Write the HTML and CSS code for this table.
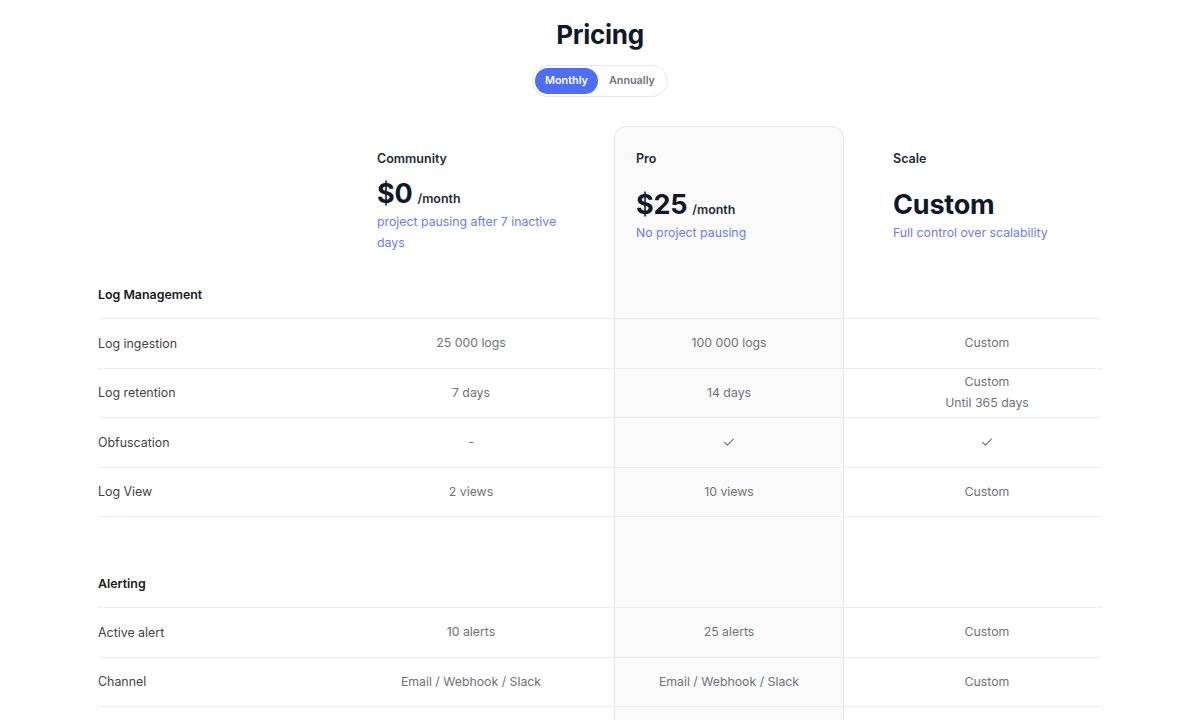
FILE: index.html
```html
<!DOCTYPE html>
<html lang="en">
<head>
<meta charset="utf-8">
<title>Pricing</title>
<link rel="stylesheet" href="styles.css">
</head>
<body>
<main class="page">
  <h1 class="title">Pricing</h1>
  <div class="toggle-wrap">
    <div class="toggle">
      <button class="tbtn active">Monthly</button>
      <button class="tbtn">Annually</button>
    </div>
  </div>

  <div class="table">
    <div class="row head">
      <div class="cell"></div>
      <div class="cell plan">
        <div class="plan-name">Community</div>
        <div class="plan-body">
          <div class="price"><span class="amount">$0</span><span class="per">/month</span></div>
          <div class="desc">project pausing after 7 inactive days</div>
        </div>
      </div>
      <div class="cell plan pro pro-top">
        <div class="plan-name">Pro</div>
        <div class="plan-body">
          <div class="price"><span class="amount">$25</span><span class="per">/month</span></div>
          <div class="desc">No project pausing</div>
        </div>
      </div>
      <div class="cell plan">
        <div class="plan-name">Scale</div>
        <div class="plan-body">
          <div class="price solo"><span class="amount">Custom</span></div>
          <div class="desc">Full control over scalability</div>
        </div>
      </div>
    </div>

    <div class="row section">
      <div class="cell label-strong">Log Management</div>
      <div class="cell"></div>
      <div class="cell pro"></div>
      <div class="cell"></div>
    </div>
    <div class="row line">
      <div class="cell label">Log ingestion</div>
      <div class="cell val">25 000 logs</div>
      <div class="cell val pro">100 000 logs</div>
      <div class="cell val">Custom</div>
    </div>
    <div class="row line">
      <div class="cell label">Log retention</div>
      <div class="cell val">7 days</div>
      <div class="cell val pro">14 days</div>
      <div class="cell val">Custom<br>Until 365 days</div>
    </div>
    <div class="row line">
      <div class="cell label">Obfuscation</div>
      <div class="cell val">-</div>
      <div class="cell val pro"><svg class="check" viewBox="0 0 16 16"><path d="M3 8.5l3.2 3L13 4.8"/></svg></div>
      <div class="cell val"><svg class="check" viewBox="0 0 16 16"><path d="M3 8.5l3.2 3L13 4.8"/></svg></div>
    </div>
    <div class="row line">
      <div class="cell label">Log View</div>
      <div class="cell val">2 views</div>
      <div class="cell val pro">10 views</div>
      <div class="cell val">Custom</div>
    </div>

    <div class="row spacer">
      <div class="cell"></div>
      <div class="cell"></div>
      <div class="cell pro"></div>
      <div class="cell"></div>
    </div>

    <div class="row section">
      <div class="cell label-strong">Alerting</div>
      <div class="cell"></div>
      <div class="cell pro"></div>
      <div class="cell"></div>
    </div>
    <div class="row line">
      <div class="cell label">Active alert</div>
      <div class="cell val">10 alerts</div>
      <div class="cell val pro">25 alerts</div>
      <div class="cell val">Custom</div>
    </div>
    <div class="row line">
      <div class="cell label">Channel</div>
      <div class="cell val">Email / Webhook / Slack</div>
      <div class="cell val pro">Email / Webhook / Slack</div>
      <div class="cell val">Custom</div>
    </div>
    <div class="row line">
      <div class="cell label">&nbsp;</div>
      <div class="cell val"></div>
      <div class="cell val pro"></div>
      <div class="cell val"></div>
    </div>
  </div>
</main>
</body>
</html>
```

FILE: styles.css
```css
* { box-sizing: border-box; }
html, body { margin: 0; padding: 0; background: #ffffff; }
body {
  font-family: Inter, "Noto Sans", "Liberation Sans", sans-serif;
  color: #3f3f46;
  overflow: hidden;
  height: 720px;
}
.page {
  width: 1004px;
  margin: 0 auto;
  padding-top: 17px;
}
.title {
  margin: 0;
  text-align: center;
  font-size: 26px;
  line-height: 36px;
  font-weight: 700;
  color: #111827;
  letter-spacing: -0.3px;
}
.toggle-wrap {
  display: flex;
  justify-content: center;
  margin-top: 12px;
}
.toggle {
  display: flex;
  gap: 1px;
  padding: 2px;
  border: 1px solid #e5e7eb;
  border-radius: 999px;
  background: #fff;
}
.tbtn {
  font-family: inherit;
  font-size: 10.8px;
  font-weight: 600;
  line-height: 16px;
  padding: 5px 10px;
  height: 26px;
  border: 0;
  border-radius: 999px;
  background: transparent;
  color: #6b7280;
}
.tbtn.active {
  background: #4f6ef7;
  color: #fff;
}
.table {
  margin-top: 29px;
}
.row {
  display: grid;
  grid-template-columns: repeat(4, 230px);
  column-gap: 28px;
}
.cell {
  display: flex;
  align-items: center;
}
.pro {
  background: #fafafa;
  border-left: 1px solid #e5e7eb;
  border-right: 1px solid #e5e7eb;
}
.pro-top {
  border-top: 1px solid #e5e7eb;
  border-radius: 12px 12px 0 0;
}
.head { height: 145px; }
.plan {
  flex-direction: column;
  align-items: flex-start;
  padding: 23px 21px 11px 21px;
}
.plan.pro-top { padding-top: 22px; }
.plan-name {
  font-size: 12.5px;
  line-height: 20px;
  font-weight: 600;
  color: #1f2937;
}
.plan-body {
  flex: 1;
  display: flex;
  flex-direction: column;
  justify-content: center;
}
.price {
  font-size: 27px;
  line-height: 36px;
  margin-bottom: -6px;
  white-space: nowrap;
}
.price.solo {
  margin-top: 1px;
  margin-bottom: -1px;
}
.amount {
  font-size: 27px;
  font-weight: 700;
  color: #111827;
  letter-spacing: -0.2px;
}
.per {
  margin-left: 5px;
  font-size: 12.4px;
  font-weight: 600;
  color: #1f2937;
}
.desc {
  font-size: 12.3px;
  line-height: 21px;
  color: #6b7cf0;
}
.section {
  height: 48px;
  border-bottom: 1px solid #ececee;
}
.label-strong {
  font-size: 12.4px;
  font-weight: 600;
  color: #18181b;
}
.line {
  height: 49.5px;
  border-bottom: 1px solid #ececee;
}
.label {
  font-size: 12.4px;
  color: #3f3f46;
}
.val {
  justify-content: center;
  text-align: center;
  font-size: 12.3px;
  line-height: 20.5px;
  color: #71717a;
}
.spacer { height: 43px; }
.check {
  width: 14px;
  height: 14px;
  fill: none;
  stroke: #6b7280;
  stroke-width: 1.3;
  stroke-linecap: round;
  stroke-linejoin: round;
}
```
